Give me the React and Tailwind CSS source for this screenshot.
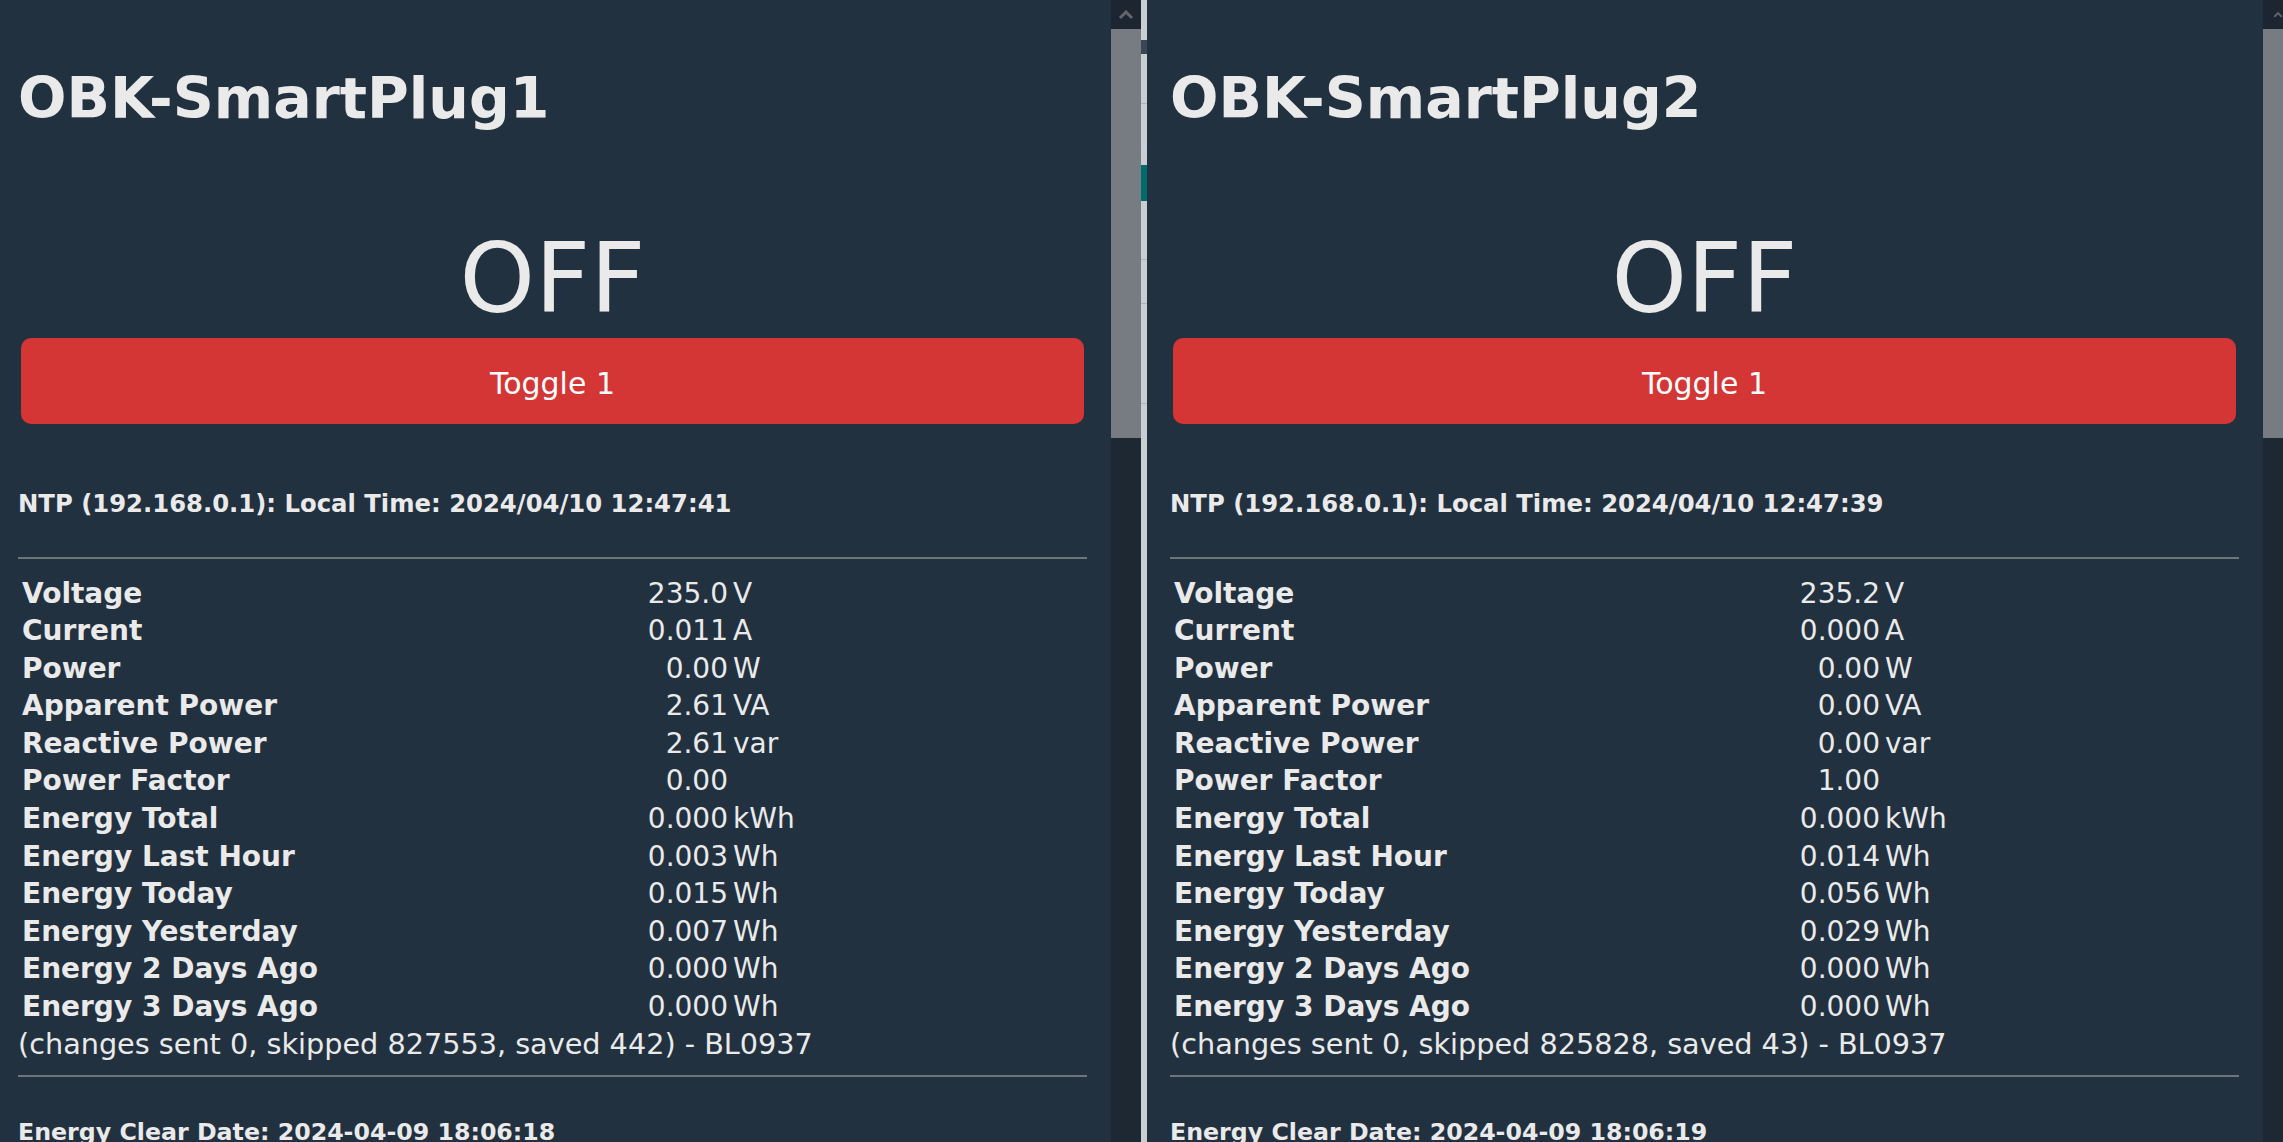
import React from 'react'

const plugs = [
  {
    name: 'OBK-SmartPlug1',
    time: '2024/04/10 12:47:41',
    values: ['235.0', '0.011', '0.00', '2.61', '2.61', '0.00', '0.000', '0.003', '0.015', '0.007', '0.000', '0.000'],
    stats: '(changes sent 0, skipped 827553, saved 442) - BL0937',
    clear: '2024-04-09 18:06:18',
    pad: 'pl-[18px]',
    width: 'w-[1111px]',
  },
  {
    name: 'OBK-SmartPlug2',
    time: '2024/04/10 12:47:39',
    values: ['235.2', '0.000', '0.00', '0.00', '0.00', '1.00', '0.000', '0.014', '0.056', '0.029', '0.000', '0.000'],
    stats: '(changes sent 0, skipped 825828, saved 43) - BL0937',
    clear: '2024-04-09 18:06:19',
    pad: 'pl-[23px]',
    width: 'w-[1116px]',
  },
]

const rows = [
  ['Voltage', 'V'],
  ['Current', 'A'],
  ['Power', 'W'],
  ['Apparent Power', 'VA'],
  ['Reactive Power', 'var'],
  ['Power Factor', ''],
  ['Energy Total', 'kWh'],
  ['Energy Last Hour', 'Wh'],
  ['Energy Today', 'Wh'],
  ['Energy Yesterday', 'Wh'],
  ['Energy 2 Days Ago', 'Wh'],
  ['Energy 3 Days Ago', 'Wh'],
]

function Scrollbar({ wide }) {
  return (
    <div className={`flex h-full shrink-0 flex-col ${wide ? 'w-[30px]' : 'w-[20px]'}`}>
      <div className="flex h-[29px] shrink-0 items-center justify-center bg-[#1d2530]">
        <svg width="16" height="10" viewBox="0 0 16 10" className={wide ? '' : 'ml-[10px]'}>
          <polyline points="2,8 8,2 14,8" fill="none" stroke="#5f666e" strokeWidth="3" />
        </svg>
      </div>
      <div className="h-[409px] shrink-0 bg-[#777c83]" />
      <div className="flex-1 bg-[#1e2832]" />
    </div>
  )
}

function Panel({ plug }) {
  return (
    <div className={`flex h-full shrink-0 flex-col overflow-hidden bg-[#223140] pr-[24px] text-[#eaeaea] ${plug.pad} ${plug.width}`}>
      <div className="mt-[66px] h-[64px] shrink-0 whitespace-nowrap text-[57px] font-bold leading-[64px]">{plug.name}</div>
      <div className="mt-[101px] h-[96px] shrink-0 text-center text-[96px] leading-[96px]">OFF</div>
      <div className="mx-[3px] mt-[11px] flex h-[86px] shrink-0 items-center justify-center rounded-[10px] bg-[#d43535] pt-[5px] text-[30px] text-white">
        Toggle 1
      </div>
      <div className="mt-[66px] shrink-0 whitespace-nowrap text-[24.3px] font-bold leading-[28px]">
        NTP (192.168.0.1): Local Time: {plug.time}
      </div>
      <div className="mt-[39px] h-[2px] shrink-0 bg-[#6f7479]" />
      <div className="mt-[15.5px] flex shrink-0 flex-col">
        {rows.map(([label, unit], i) => (
          <div key={label} className="grid h-[37.6px] shrink-0 grid-cols-[510px_200px_1fr] text-[28px] leading-[37.6px]">
            <span className="pl-[4px] font-bold whitespace-nowrap">{label}</span>
            <span className="text-right">{plug.values[i]}</span>
            <span className="pl-[5px]">{unit}</span>
          </div>
        ))}
      </div>
      <div className="shrink-0 whitespace-nowrap text-[28.7px] leading-[37.6px]">{plug.stats}</div>
      <div className="mt-[12px] h-[2px] shrink-0 bg-[#6f7479]" />
      <div className="mt-[41px] shrink-0 whitespace-nowrap text-[23.7px] font-bold leading-[28px]">
        Energy Clear Date: {plug.clear}
      </div>
    </div>
  )
}

function BackStrip() {
  return (
    <div className="flex h-full w-[6px] shrink-0 flex-col bg-[#c9ced2]">
      <div className="mt-[40px] h-[14px] shrink-0 bg-[#3b4654]" />
      <div className="mt-[49px] h-px shrink-0 bg-[#aab1b6]" />
      <div className="mt-[41px] h-px shrink-0 bg-[#b4dbe3]" />
      <div className="mt-[19px] h-[36px] shrink-0 bg-[#006b6b]" />
      <div className="mt-[58px] h-px shrink-0 bg-[#aab1b6]" />
      <div className="mt-[43px] h-px shrink-0 bg-[#aab1b6]" />
      <div className="mt-[99px] h-px shrink-0 bg-[#aab1b6]" />
      <div className="flex-1 bg-[#c9ced2]" />
    </div>
  )
}

export default function App() {
  return (
    <div className="flex h-[1142px] w-[2283px] overflow-hidden bg-[#223140] font-['DejaVu_Sans',sans-serif]">
      <Panel plug={plugs[0]} />
      <Scrollbar wide />
      <BackStrip />
      <Panel plug={plugs[1]} />
      <Scrollbar />
    </div>
  )
}
